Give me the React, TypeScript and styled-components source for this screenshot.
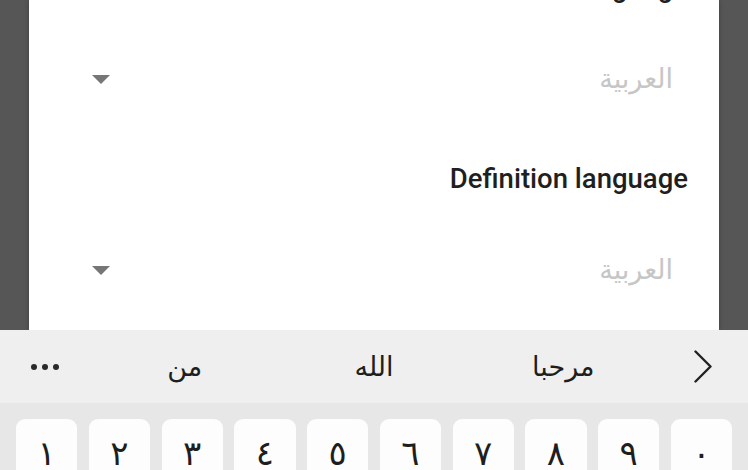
import styled, { createGlobalStyle } from 'styled-components';

const GlobalStyle = createGlobalStyle`
  html, body {
    margin: 0;
    padding: 0;
    background: #565656;
    overflow: hidden;
  }
  * {
    box-sizing: border-box;
  }
`;

const sections = ['Word language', 'Definition language'];
const suggestions = ['من', 'الله', 'مرحبا'];
const digits = ['١', '٢', '٣', '٤', '٥', '٦', '٧', '٨', '٩', '٠'];

const App: React.FC = () => {
  return (
    <Screen>
      <GlobalStyle />
      <Backdrop>
        <Dialog>
          <DialogBody>
            {sections.map((title) => (
              <Section key={title}>
                <Label>{title}</Label>
                <Dropdown>
                  <Caret />
                  <Placeholder>العربية</Placeholder>
                </Dropdown>
              </Section>
            ))}
          </DialogBody>
        </Dialog>
      </Backdrop>
      <Keyboard>
        <SuggestionBar>
          <Slot>
            <Dots>
              <Dot />
              <Dot />
              <Dot />
            </Dots>
          </Slot>
          {suggestions.map((word) => (
            <Slot key={word}>
              <Word>{word}</Word>
            </Slot>
          ))}
          <Slot>
            <svg width="20" height="34" viewBox="0 0 20 34">
              <path d="M2.5 1.5 L17.5 16.5 L2.5 31.5" fill="none" stroke="#222" strokeWidth="2.4" strokeLinecap="round" strokeLinejoin="round" />
            </svg>
          </Slot>
        </SuggestionBar>
        <KeyRow>
          {digits.map((d) => (
            <Key key={d}>{d}</Key>
          ))}
        </KeyRow>
      </Keyboard>
    </Screen>
  );
};

export default App;

const Screen = styled.div`
  display: flex;
  flex-direction: column;
  width: 748px;
  height: 470px;
  overflow: hidden;
  font-family: Roboto, 'DejaVu Sans', sans-serif;
`;

const Backdrop = styled.div`
  height: 330px;
  flex-shrink: 0;
  display: flex;
  justify-content: center;
  padding: 0 29px;
  overflow: hidden;
`;

const Dialog = styled.div`
  width: 100%;
  background: #ffffff;
  box-shadow: 0 0 5px rgba(0, 0, 0, 0.25);
  overflow: hidden;
`;

const DialogBody = styled.div`
  margin-top: -36px;
  display: flex;
  flex-direction: column;
`;

const Section = styled.div`
  display: flex;
  flex-direction: column;
  padding-bottom: 49px;
`;

const Label = styled.div`
  height: 48px;
  line-height: 48px;
  text-align: right;
  padding-right: 31px;
  font-size: 27.5px;
  font-weight: 500;
  color: #1f1f1f;
`;

const Dropdown = styled.div`
  margin-top: 38px;
  height: 56px;
  display: flex;
  align-items: center;
  justify-content: space-between;
  padding: 0 46px 0 63px;
`;

const Caret = styled.span`
  width: 0;
  height: 0;
  margin-top: 2px;
  border-left: 9px solid transparent;
  border-right: 9px solid transparent;
  border-top: 9px solid #767676;
`;

const Placeholder = styled.span`
  font-family: 'DejaVu Sans', sans-serif;
  font-size: 27px;
  color: #c6c6c6;
  direction: rtl;
`;

const Keyboard = styled.div`
  flex: 1;
  display: flex;
  flex-direction: column;
  background: #e7e7e7;
`;

const SuggestionBar = styled.div`
  height: 73px;
  flex-shrink: 0;
  display: grid;
  grid-template-columns: 90px 1fr 1fr 1fr 90px;
  background: #efefef;
`;

const Slot = styled.div`
  display: flex;
  align-items: center;
  justify-content: center;
`;

const Dots = styled.div`
  display: flex;
  gap: 5px;
`;

const Dot = styled.span`
  width: 6px;
  height: 6px;
  border-radius: 50%;
  background: #2a2a2a;
`;

const Word = styled.span`
  font-family: 'DejaVu Sans', sans-serif;
  font-size: 27px;
  color: #1e1e1e;
  direction: rtl;
`;

const KeyRow = styled.div`
  display: flex;
  gap: 11.5px;
  padding: 16px 16px 0;
`;

const Key = styled.div`
  flex: 1;
  height: 72px;
  background: #fdfdfd;
  border-radius: 9px;
  display: flex;
  justify-content: center;
  padding-top: 14px;
  font-family: 'DejaVu Sans', sans-serif;
  font-size: 34px;
  line-height: 40px;
  color: #1e1e1e;
`;
